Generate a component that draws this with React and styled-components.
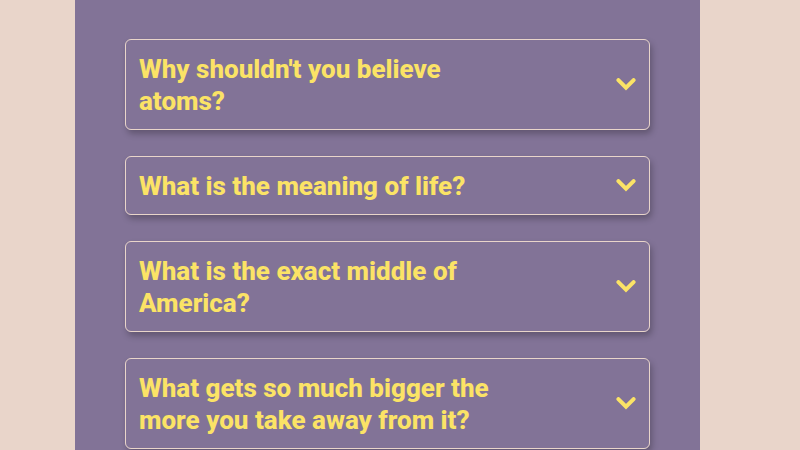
import React from "react";
import styled, { createGlobalStyle } from "styled-components";

const GlobalStyle = createGlobalStyle`
  * { box-sizing: border-box; }
  body {
    margin: 0;
    background: #e9d5ca;
    font-family: Roboto, sans-serif;
  }
`;

const Panel = styled.main`
  display: flex;
  flex-direction: column;
  gap: 26px;
  min-height: 100vh;
  margin: 0 100px 0 75px;
  padding: 39px 50px 50px;
  background: #827397;
`;

const Item = styled.button`
  display: flex;
  align-items: center;
  justify-content: space-between;
  width: 100%;
  padding: 13px 13px 12px;
  border: 1px solid #e9d5ca;
  border-radius: 6px;
  background: transparent;
  box-shadow: 2px 4px 6px rgba(0, 0, 0, 0.25);
  color: #fbe366;
  font: inherit;
  text-align: left;
  cursor: pointer;
`;

const Question = styled.span`
  max-width: 75%;
  font-size: 26px;
  font-weight: 800;
  line-height: 32px;
`;

const ChevronIcon = styled.svg`
  flex: none;
  width: 20px;
  height: 14px;
  fill: none;
  stroke: currentColor;
  stroke-width: 4;
  stroke-linecap: round;
`;

const Chevron = () => (
  <ChevronIcon viewBox="0 0 20 14" aria-hidden="true">
    <path d="M2.4 2.1 10 9.6l7.6-7.5" />
  </ChevronIcon>
);

const questions = [
  "Why shouldn't you believe atoms?",
  "What is the meaning of life?",
  "What is the exact middle of America?",
  "What gets so much bigger the more you take away from it?",
];

export default function App() {
  return (
    <>
      <GlobalStyle />
      <Panel>
        {questions.map((question) => (
          <Item key={question} type="button" aria-expanded="false">
            <Question>{question}</Question>
            <Chevron />
          </Item>
        ))}
      </Panel>
    </>
  );
}
